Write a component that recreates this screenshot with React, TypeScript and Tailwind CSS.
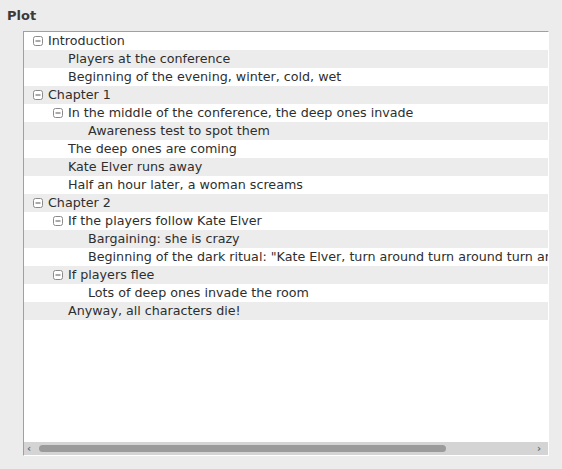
import React from "react";

type Row = { label: string; level: number; expandable?: boolean };

const rows: Row[] = [
  { label: "Introduction", level: 0, expandable: true },
  { label: "Players at the conference", level: 1 },
  { label: "Beginning of the evening, winter, cold, wet", level: 1 },
  { label: "Chapter 1", level: 0, expandable: true },
  { label: "In the middle of the conference, the deep ones invade", level: 1, expandable: true },
  { label: "Awareness test to spot them", level: 2 },
  { label: "The deep ones are coming", level: 1 },
  { label: "Kate Elver runs away", level: 1 },
  { label: "Half an hour later, a woman screams", level: 1 },
  { label: "Chapter 2", level: 0, expandable: true },
  { label: "If the players follow Kate Elver", level: 1, expandable: true },
  { label: "Bargaining: she is crazy", level: 2 },
  {
    label:
      'Beginning of the dark ritual: "Kate Elver, turn around turn around turn around turn around"',
    level: 2,
  },
  { label: "If players flee", level: 1, expandable: true },
  { label: "Lots of deep ones invade the room", level: 2 },
  { label: "Anyway, all characters die!", level: 1 },
];

const indents = ["pl-[9px]", "pl-[29px]", "pl-[49px]"];

const Minus = () => (
  <svg width="10" height="10" viewBox="0 0 10 10" className="shrink-0">
    <rect x="0.5" y="0.5" width="9" height="9" rx="2" fill="#fff" stroke="#8a8a8a" />
    <line x1="2.5" y1="5" x2="7.5" y2="5" stroke="#555" strokeWidth="1" />
  </svg>
);

export default function App() {
  return (
    <div className="w-[562px] h-[469px] bg-[#ececec] font-['DejaVu_Sans',sans-serif] text-[#2e2e2e] overflow-hidden">
      <div className="pl-[7px] pt-[6px] h-[31px] text-[13px] font-bold text-[#3a3a3a]">Plot</div>
      <div className="ml-[23px] w-[526px] h-[425px] border-t border-l border-t-[#a0a0a0] border-l-[#a0a0a0] border-b border-r border-b-white border-r-white flex flex-col bg-white">
        <div className="flex-1 overflow-hidden">
          {rows.map((r, i) => (
            <div
              key={i}
              className={`h-[18px] flex items-center whitespace-nowrap text-[12.7px] ${indents[r.level]} ${
                i % 2 === 1 ? "bg-[#ececec]" : "bg-white"
              }`}
            >
              {r.expandable ? (
                <span className="w-[15px] shrink-0 flex">
                  <Minus />
                </span>
              ) : (
                <span className="w-[15px] shrink-0" />
              )}
              <span>{r.label}</span>
            </div>
          ))}
        </div>
        <div className="h-[13px] bg-[#d4d4d4] flex items-center px-[3px] gap-[4px]">
          <span className="text-[10px] text-[#6e6e6e] font-bold leading-none w-[8px]">‹</span>
          <div className="w-[407px] h-[7px] rounded-full bg-[#9b9b9b]" />
          <div className="flex-1" />
          <span className="text-[10px] text-[#6e6e6e] font-bold leading-none w-[8px]">›</span>
        </div>
      </div>
    </div>
  );
}
